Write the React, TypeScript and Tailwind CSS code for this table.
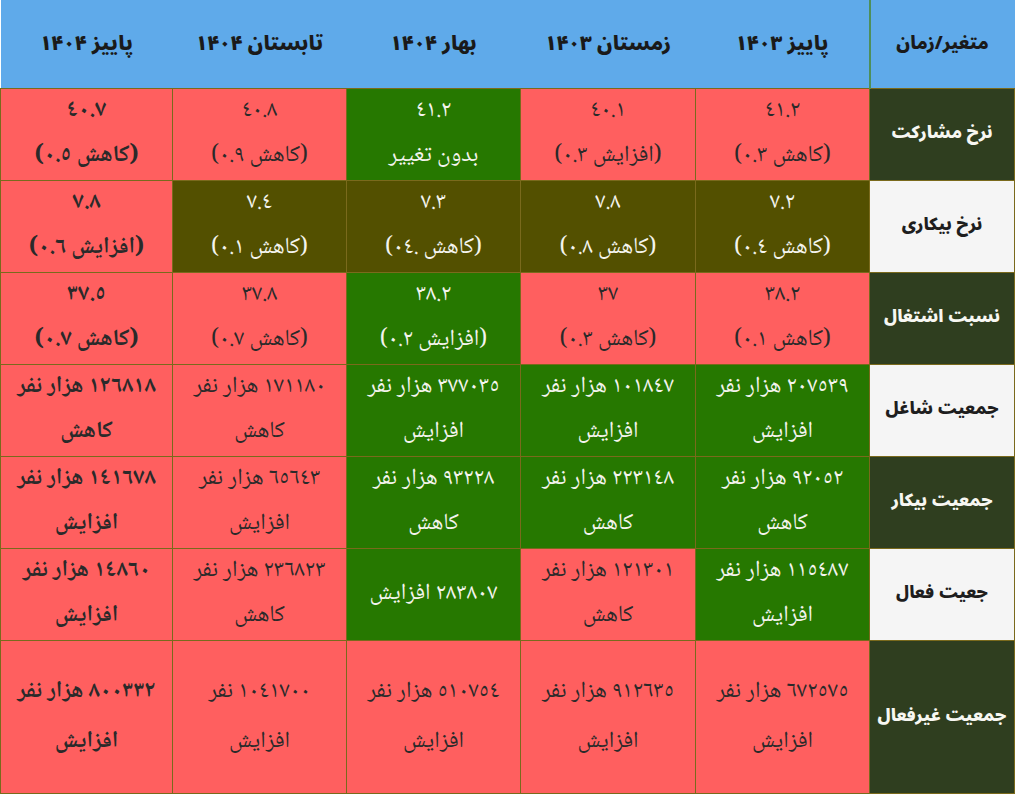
import React from "react";

type Tone = "red" | "green" | "olive";

type Cell = { lines: string[]; tone: Tone };

type Row = { label: string; dark: boolean; tall?: boolean; cells: Cell[] };

const seasons = ["پاییز ۱۴۰۳", "زمستان ۱۴۰۳", "بهار ۱۴۰۴", "تابستان ۱۴۰۴", "پاییز ۱۴۰۴"];

const rows: Row[] = [
  {
    label: "نرخ مشارکت",
    dark: true,
    cells: [
      { lines: ["٤١.٢", "(کاهش ٠.٣)"], tone: "red" },
      { lines: ["٤٠.١", "(افزایش ٠.٣)"], tone: "red" },
      { lines: ["٤١.٢", "بدون تغییر"], tone: "green" },
      { lines: ["٤٠.٨", "(کاهش ٠.٩)"], tone: "red" },
      { lines: ["٤٠.٧", "(کاهش ٠.٥)"], tone: "red" },
    ],
  },
  {
    label: "نرخ بیکاری",
    dark: false,
    cells: [
      { lines: ["٧.٢", "(کاهش ٠.٤)"], tone: "olive" },
      { lines: ["٧.٨", "(کاهش ٠.٨)"], tone: "olive" },
      { lines: ["٧.٣", "(کاهش .٠٤)"], tone: "olive" },
      { lines: ["٧.٤", "(کاهش ٠.١)"], tone: "olive" },
      { lines: ["٧.٨", "(افزایش ٠.٦)"], tone: "red" },
    ],
  },
  {
    label: "نسبت اشتغال",
    dark: true,
    cells: [
      { lines: ["٣٨.٢", "(کاهش ٠.١)"], tone: "red" },
      { lines: ["٣٧", "(کاهش ٠.٣)"], tone: "red" },
      { lines: ["٣٨.٢", "(افزایش ٠.٢)"], tone: "green" },
      { lines: ["٣٧.٨", "(کاهش ٠.٧)"], tone: "red" },
      { lines: ["٣٧.٥", "(کاهش ٠.٧)"], tone: "red" },
    ],
  },
  {
    label: "جمعیت شاغل",
    dark: false,
    cells: [
      { lines: ["٢٠٧٥٣٩ هزار نفر", "افزایش"], tone: "green" },
      { lines: ["١٠١٨٤٧ هزار نفر", "افزایش"], tone: "green" },
      { lines: ["٣٧٧٠٣٥ هزار نفر", "افزایش"], tone: "green" },
      { lines: ["١٧١١٨٠ هزار نفر", "کاهش"], tone: "red" },
      { lines: ["١٢٦٨١٨ هزار نفر", "کاهش"], tone: "red" },
    ],
  },
  {
    label: "جمعیت بیکار",
    dark: true,
    cells: [
      { lines: ["٩٢٠٥٢ هزار نفر", "کاهش"], tone: "green" },
      { lines: ["٢٢٣١٤٨ هزار نفر", "کاهش"], tone: "green" },
      { lines: ["٩٣٢٢٨ هزار نفر", "کاهش"], tone: "green" },
      { lines: ["٦٥٦٤٣ هزار نفر", "افزایش"], tone: "red" },
      { lines: ["١٤١٦٧٨ هزار نفر", "افزایش"], tone: "red" },
    ],
  },
  {
    label: "جعیت فعال",
    dark: false,
    cells: [
      { lines: ["١١٥٤٨٧ هزار نفر", "افزایش"], tone: "green" },
      { lines: ["١٢١٣٠١ هزار نفر", "کاهش"], tone: "red" },
      { lines: ["٢٨٣٨٠٧ افزایش"], tone: "green" },
      { lines: ["٢٣٦٨٢٣ هزار نفر", "کاهش"], tone: "red" },
      { lines: ["١٤٨٦٠ هزار نفر", "افزایش"], tone: "red" },
    ],
  },
  {
    label: "جمعیت غیرفعال",
    dark: true,
    tall: true,
    cells: [
      { lines: ["٦٧٢٥٧٥ هزار نفر", "افزایش"], tone: "red" },
      { lines: ["٩١٢٦٣٥ هزار نفر", "افزایش"], tone: "red" },
      { lines: ["٥١٠٧٥٤ هزار نفر", "افزایش"], tone: "red" },
      { lines: ["١٠٤١٧٠٠ نفر", "افزایش"], tone: "red" },
      { lines: ["٨٠٠٣٣٢ هزار نفر", "افزایش"], tone: "red" },
    ],
  },
];

const toneClass: Record<Tone, string> = {
  red: "bg-[#ff5f5f] text-[#2a2a2a]",
  green: "bg-[#267800] text-[#f4f4ee]",
  olive: "bg-[#535000] text-[#f4f4ee]",
};

export default function App() {
  return (
    <div className="w-[1015px] h-[795px] bg-white overflow-hidden">
      <table
        dir="rtl"
        className="w-[1014px] border-collapse table-fixed font-['Noto_Sans_Arabic','Vazirmatn','DejaVu_Sans',sans-serif]"
      >
        <colgroup>
          <col className="w-[145px]" />
          <col className="w-[174px]" />
          <col className="w-[175px]" />
          <col className="w-[174px]" />
          <col className="w-[174px]" />
          <col className="w-[172px]" />
        </colgroup>
        <thead>
          <tr className="h-[88px] bg-[#5faaea] text-[#1a1a1a]">
            <th className="text-[18px] font-black whitespace-nowrap border-l-2 border-l-[#4e8f5a]">متغیر/زمان</th>
            {seasons.map((s) => (
              <th key={s} className="text-[20px] font-black">
                {s}
              </th>
            ))}
          </tr>
        </thead>
        <tbody>
          {rows.map((r) => (
            <tr key={r.label} className={r.tall ? "h-[153px]" : "h-[92px]"}>
              <td
                className={`text-center text-[17px] font-black whitespace-nowrap px-0 border border-[#7a6a1c] ${
                  r.dark ? "bg-[#2f3e1f] text-[#f7f7f2]" : "bg-[#f5f5f5] text-[#1e1e1e]"
                }`}
              >
                {r.label}
              </td>
              {r.cells.map((c, i) => (
                <td
                  key={i}
                  className={`text-center border border-[#7a6a1c] text-[23px] whitespace-nowrap font-['Noto_Naskh_Arabic','Noto_Serif_Arabic','Amiri','DejaVu_Sans',serif] ${
                    toneClass[c.tone]
                  } ${i === 4 ? "font-bold" : ""}`}
                >
                  <div className={`flex flex-col items-center ${r.tall ? "leading-[50px]" : "leading-[45px]"}`}>
                    {c.lines.map((l) => (
                      <span key={l}>{l}</span>
                    ))}
                  </div>
                </td>
              ))}
            </tr>
          ))}
        </tbody>
      </table>
    </div>
  );
}
